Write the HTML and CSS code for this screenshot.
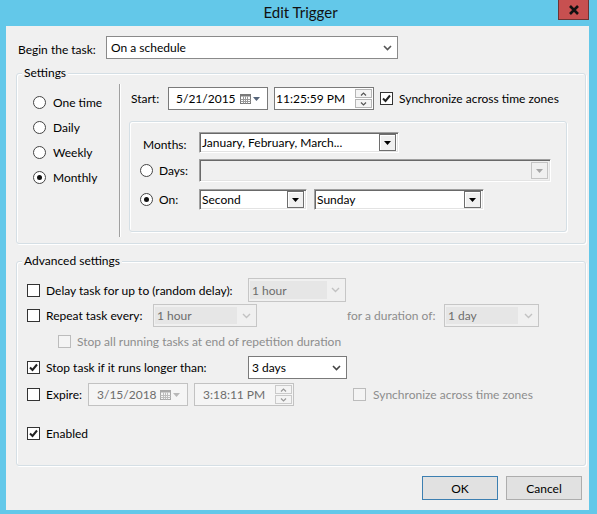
FILE: index.html
```html
<!DOCTYPE html>
<html>
<head>
<meta charset="utf-8">
<link rel="stylesheet" href="styles.css">
</head>
<body>
<div class="window">
  <div class="titlebar">
    <span class="title">Edit Trigger</span>
    <div class="close"><svg width="12" height="10" viewBox="0 0 12 10"><path d="M2 1 L10 9 M10 1 L2 9" stroke="#111" stroke-width="2.6" fill="none"/></svg></div>
  </div>
  <div class="client">
    <div class="begin-row">
      <span class="begin-label">Begin the task:</span>
      <div class="mcombo begin-combo">
        <span class="mtext">On a schedule</span>
        <svg class="chev" width="9" height="6" viewBox="0 0 9 6"><path d="M1 1 L4.5 4.5 L8 1" fill="none" stroke="#555" stroke-width="1.6"/></svg>
      </div>
    </div>

    <div class="group settings">
      <span class="group-title">Settings</span>
      <div class="sched-col">
        <div class="radio-row"><span class="radio"></span><span class="rlabel">One time</span></div>
        <div class="radio-row"><span class="radio"></span><span class="rlabel">Daily</span></div>
        <div class="radio-row"><span class="radio"></span><span class="rlabel">Weekly</span></div>
        <div class="radio-row"><span class="radio on"></span><span class="rlabel">Monthly</span></div>
      </div>
      <div class="vsep"></div>
      <div class="sched-right">
        <div class="start-row">
          <span class="start-label">Start:</span>
          <div class="mbox date-box">
            <span class="mtext date-text">5/21/2015</span>
            <svg class="cal" width="11" height="10" viewBox="0 0 11 10"><rect x="0.5" y="0.5" width="10" height="9" fill="#fff" stroke="#7a7a7a"/><rect x="0.5" y="0.5" width="10" height="2" fill="#7a7a7a"/><path d="M0.5 5.5 H10.5 M0.5 7.5 H10.5 M3.5 2.5 V9.5 M5.5 2.5 V9.5 M7.5 2.5 V9.5" stroke="#9a9a9a" stroke-width="1"/></svg>
            <svg class="tri" width="7" height="4" viewBox="0 0 7 4"><path d="M0 0 H7 L3.5 4 Z" fill="#56657a"/></svg>
          </div>
          <div class="mbox time-box">
            <span class="mtext time-text">11:25:59 PM</span>
            <div class="spin">
              <div class="spin-btn"><svg width="7" height="4" viewBox="0 0 7 4"><path d="M1 3.5 L3.5 1 L6 3.5" fill="none" stroke="#555" stroke-width="1.2"/></svg></div>
              <div class="spin-btn"><svg width="7" height="4" viewBox="0 0 7 4"><path d="M1 0.5 L3.5 3 L6 0.5" fill="none" stroke="#555" stroke-width="1.2"/></svg></div>
            </div>
          </div>
          <span class="check checked"><svg width="11" height="11" viewBox="0 0 11 11"><path d="M2 5.5 L4.5 8 L9 2.5" fill="none" stroke="#222" stroke-width="2"/></svg></span>
          <span class="clabel">Synchronize across time zones</span>
        </div>
        <div class="group inner">
          <div class="mrow months-row">
            <span class="mlabel">Months:</span>
            <div class="ccombo months-combo">
              <span class="ctext">January, February, March...</span>
              <span class="cbtn"><svg width="7" height="4" viewBox="0 0 7 4"><path d="M0 0 H7 L3.5 4 Z" fill="#000"/></svg></span>
            </div>
          </div>
          <div class="mrow days-row">
            <span class="radio"></span>
            <span class="rlabel2">Days:</span>
            <div class="ccombo days-combo disabled">
              <span class="ctext"></span>
              <span class="cbtn dis"><svg width="7" height="4" viewBox="0 0 7 4"><path d="M0 0 H7 L3.5 4 Z" fill="#a6a6a6"/></svg></span>
            </div>
          </div>
          <div class="mrow on-row">
            <span class="radio on"></span>
            <span class="rlabel2">On:</span>
            <div class="ccombo second-combo">
              <span class="ctext">Second</span>
              <span class="cbtn"><svg width="7" height="4" viewBox="0 0 7 4"><path d="M0 0 H7 L3.5 4 Z" fill="#000"/></svg></span>
            </div>
            <div class="ccombo sunday-combo">
              <span class="ctext">Sunday</span>
              <span class="cbtn"><svg width="7" height="4" viewBox="0 0 7 4"><path d="M0 0 H7 L3.5 4 Z" fill="#000"/></svg></span>
            </div>
          </div>
        </div>
      </div>
    </div>

    <div class="group advanced">
      <span class="group-title">Advanced settings</span>
      <div class="arow delay-row">
        <span class="check"></span>
        <span class="alabel w202">Delay task for up to (random delay):</span>
        <div class="dcombo delay-combo">
          <span class="dfield f77">1 hour</span>
          <svg class="chev" width="9" height="6" viewBox="0 0 9 6"><path d="M1 1 L4.5 4.5 L8 1" fill="none" stroke="#c2c2c2" stroke-width="1.4"/></svg>
        </div>
      </div>
      <div class="arow repeat-row">
        <span class="check"></span>
        <span class="alabel w107">Repeat task every:</span>
        <div class="dcombo repeat-combo">
          <span class="dfield f82">1 hour</span>
          <svg class="chev" width="9" height="6" viewBox="0 0 9 6"><path d="M1 1 L4.5 4.5 L8 1" fill="none" stroke="#c2c2c2" stroke-width="1.4"/></svg>
        </div>
        <span class="alabel dis-text dur-label">for a duration of:</span>
        <div class="dcombo dur-combo">
          <span class="dfield f72">1 day</span>
          <svg class="chev" width="9" height="6" viewBox="0 0 9 6"><path d="M1 1 L4.5 4.5 L8 1" fill="none" stroke="#c2c2c2" stroke-width="1.4"/></svg>
        </div>
      </div>
      <div class="arow stopall-row">
        <span class="check dis"></span>
        <span class="alabel dis-text">Stop all running tasks at end of repetition duration</span>
      </div>
      <div class="arow stop-row">
        <span class="check checked"><svg width="11" height="11" viewBox="0 0 11 11"><path d="M2 5.5 L4.5 8 L9 2.5" fill="none" stroke="#222" stroke-width="2"/></svg></span>
        <span class="alabel w202">Stop task if it runs longer than:</span>
        <div class="mcombo stop-combo">
          <span class="mtext">3 days</span>
          <svg class="chev" width="9" height="6" viewBox="0 0 9 6"><path d="M1 1 L4.5 4.5 L8 1" fill="none" stroke="#444" stroke-width="1.6"/></svg>
        </div>
      </div>
      <div class="arow expire-row">
        <span class="check"></span>
        <span class="alabel w42">Expire:</span>
        <div class="mbox date-box dbox">
          <span class="mtext date-text2">3/15/2018</span>
          <svg class="cal" width="11" height="10" viewBox="0 0 11 10"><rect x="0.5" y="0.5" width="10" height="9" fill="#f4f4f4" stroke="#a8a8a8"/><rect x="0.5" y="0.5" width="10" height="2" fill="#a8a8a8"/><path d="M0.5 5.5 H10.5 M0.5 7.5 H10.5 M3.5 2.5 V9.5 M5.5 2.5 V9.5 M7.5 2.5 V9.5" stroke="#bdbdbd" stroke-width="1"/></svg>
          <svg class="tri" width="7" height="4" viewBox="0 0 7 4"><path d="M0 0 H7 L3.5 4 Z" fill="#b8b8b8"/></svg>
        </div>
        <div class="mbox time-box dbox">
          <span class="mtext time-text2">3:18:11 PM</span>
          <div class="spin">
            <div class="spin-btn"><svg width="7" height="4" viewBox="0 0 7 4"><path d="M1 3.5 L3.5 1 L6 3.5" fill="none" stroke="#999" stroke-width="1.2"/></svg></div>
            <div class="spin-btn"><svg width="7" height="4" viewBox="0 0 7 4"><path d="M1 0.5 L3.5 3 L6 0.5" fill="none" stroke="#999" stroke-width="1.2"/></svg></div>
          </div>
        </div>
        <div class="sync-panel">
          <span class="check dis"></span>
          <span class="alabel dis-text sync-label">Synchronize across time zones</span>
        </div>
      </div>
      <div class="arow enabled-row">
        <span class="check checked"><svg width="11" height="11" viewBox="0 0 11 11"><path d="M2 5.5 L4.5 8 L9 2.5" fill="none" stroke="#222" stroke-width="2"/></svg></span>
        <span class="alabel">Enabled</span>
      </div>
    </div>

    <div class="buttons">
      <div class="btn default">OK</div>
      <div class="btn">Cancel</div>
    </div>
  </div>
</div>
</body>
</html>
```

FILE: styles.css
```css
html, body {
  margin: 0;
  padding: 0;
}
body {
  width: 597px;
  height: 514px;
  overflow: hidden;
  background: #63c8e9;
  font-family: "Lato", "Noto Sans", sans-serif;
  font-size: 12px;
  color: #000;
}
.window {
  width: 597px;
  height: 514px;
  display: flex;
  flex-direction: column;
}
.titlebar {
  position: relative;
  height: 26px;
  display: flex;
  justify-content: center;
  align-items: center;
}
.title {
  font-size: 15px;
  color: #111;
  margin-left: 4px;
  margin-bottom: 2px;
}
.close {
  position: absolute;
  top: 0;
  right: 8px;
  width: 31px;
  height: 20px;
  box-sizing: border-box;
  background: #c75050;
  border: 1px solid #6b3434;
  border-top: none;
  display: flex;
  align-items: center;
  justify-content: center;
}
.client {
  margin-left: 6px;
  width: 583px;
  height: 484px;
  background: #f0f0f0;
  display: flex;
  flex-direction: column;
}

/* begin row */
.begin-row {
  margin-top: 10px;
  height: 23px;
  display: flex;
  align-items: center;
}
.begin-label {
  margin-left: 12px;
  width: 88px;
  margin-top: 3px;
}
.mcombo, .mbox {
  box-sizing: border-box;
  height: 23px;
  background: #fff;
  border: 1px solid #7a7a7a;
  display: flex;
  align-items: center;
}
.mtext {
  padding-left: 3px;
}
.chev {
  margin-left: auto;
  margin-right: 5px;
}
.begin-combo {
  width: 292px;
  border-color: #8a8a8a;
}
.begin-combo .mtext { padding-left: 4px; }

/* groups */
.group {
  position: relative;
  box-sizing: border-box;
  border: 1px solid #d5dfe5;
  border-radius: 3px;
  box-shadow: 1px 1px 0 #fff, inset 1px 1px 0 #fff;
}
.group-title {
  position: absolute;
  top: -9px;
  left: 5px;
  padding: 0 2px;
  background: #f0f0f0;
  line-height: 16px;
}
.settings {
  margin-top: 14px;
  margin-left: 10px;
  width: 570px;
  height: 171px;
  display: flex;
}
.sched-col {
  width: 102px;
  padding-top: 16px;
  display: flex;
  flex-direction: column;
}
.radio-row {
  height: 25px;
  display: flex;
  align-items: center;
}
.radio {
  box-sizing: border-box;
  width: 13px;
  height: 13px;
  border-radius: 50%;
  border: 1px solid #444;
  background: #fff;
  flex: none;
  display: flex;
  align-items: center;
  justify-content: center;
}
.radio.on::after {
  content: "";
  width: 5px;
  height: 5px;
  border-radius: 50%;
  background: #111;
}
.radio-row .radio {
  margin-left: 16px;
}
.rlabel {
  margin-left: 7px;
}
.vsep {
  margin-top: 10px;
  width: 1px;
  height: 153px;
  background: #a0a0a0;
  border-right: 1px solid #fff;
}
.sched-right {
  padding-left: 10px;
  display: flex;
  flex-direction: column;
}
.start-row {
  margin-top: 13px;
  height: 23px;
  display: flex;
  align-items: center;
}
.start-label {
  width: 37px;
}
.date-box {
  width: 100px;
}
.date-text {
  padding-left: 7px;
}
.cal {
  margin-left: auto;
  margin-right: 2px;
}
.tri {
  margin-right: 7px;
}
.time-box {
  width: 100px;
  margin-left: 6px;
}
.time-text {
  padding-left: 1px;
}
.spin {
  margin-left: auto;
  margin-right: 1px;
  display: flex;
  flex-direction: column;
}
.spin-btn {
  box-sizing: border-box;
  width: 17px;
  height: 9px;
  border: 1px solid #b5b5b5;
  background: #f4f4f4;
  display: flex;
  align-items: center;
  justify-content: center;
}
.spin-btn + .spin-btn {
  margin-top: 1px;
}
.check {
  box-sizing: border-box;
  width: 13px;
  height: 13px;
  border: 1px solid #333;
  background: #fff;
  flex: none;
  display: flex;
  align-items: center;
  justify-content: center;
}
.check.dis {
  border-color: #bcbcbc;
  background: #f4f4f4;
}
.start-row .check {
  margin-left: 6px;
}
.clabel {
  margin-left: 6px;
}

/* inner group */
.inner {
  margin-left: -2px;
  margin-top: 11px;
  width: 438px;
  height: 111px;
  display: flex;
  flex-direction: column;
}
.mrow {
  display: flex;
  align-items: center;
}
.months-row {
  margin-top: 10px;
  height: 21px;
  padding-left: 13px;
}
.mlabel {
  width: 56px;
  margin-top: 4px;
}
.days-row {
  margin-top: 6px;
  height: 23px;
  padding-left: 10px;
}
.on-row {
  margin-top: 7px;
  height: 21px;
  padding-left: 10px;
}
.rlabel2 {
  margin-left: 6px;
  width: 40px;
}
.ccombo {
  box-sizing: border-box;
  height: 21px;
  background: #fff;
  border: 1px solid;
  border-color: #a0a0a0 #fff #fff #a0a0a0;
  box-shadow: inset 1px 1px 0 #696969, inset -1px -1px 0 #e3e3e3;
  display: flex;
  align-items: center;
  padding: 1px 2px 1px 1px;
}
.ccombo.disabled {
  background: #f0f0f0;
  height: 23px;
}
.ctext {
  padding-left: 1px;
  margin-top: -1px;
}
.cbtn {
  margin-left: auto;
  box-sizing: border-box;
  width: 17px;
  height: 17px;
  background: #f0f0f0;
  border: 1px solid #6e6e6e;
  box-shadow: inset 1px 1px 0 #fff;
  display: flex;
  align-items: center;
  justify-content: center;
  flex: none;
}
.cbtn.dis {
  border-color: #c4c4c4;
  box-shadow: none;
}
.months-combo { width: 200px; }
.days-combo { width: 352px; }
.second-combo { width: 108px; }
.sunday-combo { width: 170px; margin-left: 7px; }

/* advanced */
.advanced {
  margin-top: 17px;
  margin-left: 10px;
  width: 570px;
  height: 205px;
  display: flex;
  flex-direction: column;
}
.arow {
  display: flex;
  align-items: center;
  padding-left: 10px;
}
.arow > .check:first-child {
  margin-right: 6px;
}
.w202 { width: 202px; }
.w107 { width: 107px; }
.w42 { width: 42px; }
.dis-text { color: #8d8d8d; }
.delay-row { margin-top: 16px; height: 24px; }
.repeat-row { margin-top: 2px; height: 23px; }
.stopall-row { margin-top: 3px; height: 22px; padding-left: 41px; }
.stop-row { margin-top: 4px; height: 23px; }
.expire-row { margin-top: 4px; height: 23px; }
.enabled-row { margin-top: 18px; height: 18px; }

.dcombo {
  box-sizing: border-box;
  height: 24px;
  border: 1px solid #c6c6c6;
  background: #f0f0f0;
  display: flex;
  align-items: center;
  padding: 2px 1px;
}
.dfield {
  height: 100%;
  box-sizing: border-box;
  background: #e6e6e6;
  color: #6d6d6d;
  padding-left: 2px;
  display: flex;
  align-items: center;
}
.dcombo .chev { margin-right: 4px; }
.f77 { width: 77px; }
.f82 { width: 82px; }
.f72 { width: 72px; }
.delay-combo { width: 98px; }
.repeat-combo { width: 104px; height: 23px; }
.dur-label { margin-left: 90px; width: 97px; }
.dur-combo { width: 95px; height: 23px; }
.stop-combo { width: 99px; }
.dbox {
  border-color: #c2c2c2;
  background: #f5f5f5;
  color: #6d6d6d;
}
.date-text2 { padding-left: 8px; }
.time-text2 { padding-left: 8px; }
.dbox .spin-btn { border-color: #cacaca; }
.sync-panel {
  margin-left: 58px;
  width: 188px;
  height: 20px;
  display: flex;
  align-items: center;
  padding-left: 1px;
}
.sync-label { margin-left: 7px; }

/* buttons */
.buttons {
  margin-top: 10px;
  height: 24px;
  display: flex;
  justify-content: flex-end;
  padding-right: 7px;
}
.btn {
  box-sizing: border-box;
  width: 76px;
  height: 24px;
  border: 1px solid #adadad;
  background: #e1e1e1;
  display: flex;
  align-items: center;
  justify-content: center;
}
.btn.default {
  border-color: #3c7fb1;
  margin-right: 8px;
}
```
